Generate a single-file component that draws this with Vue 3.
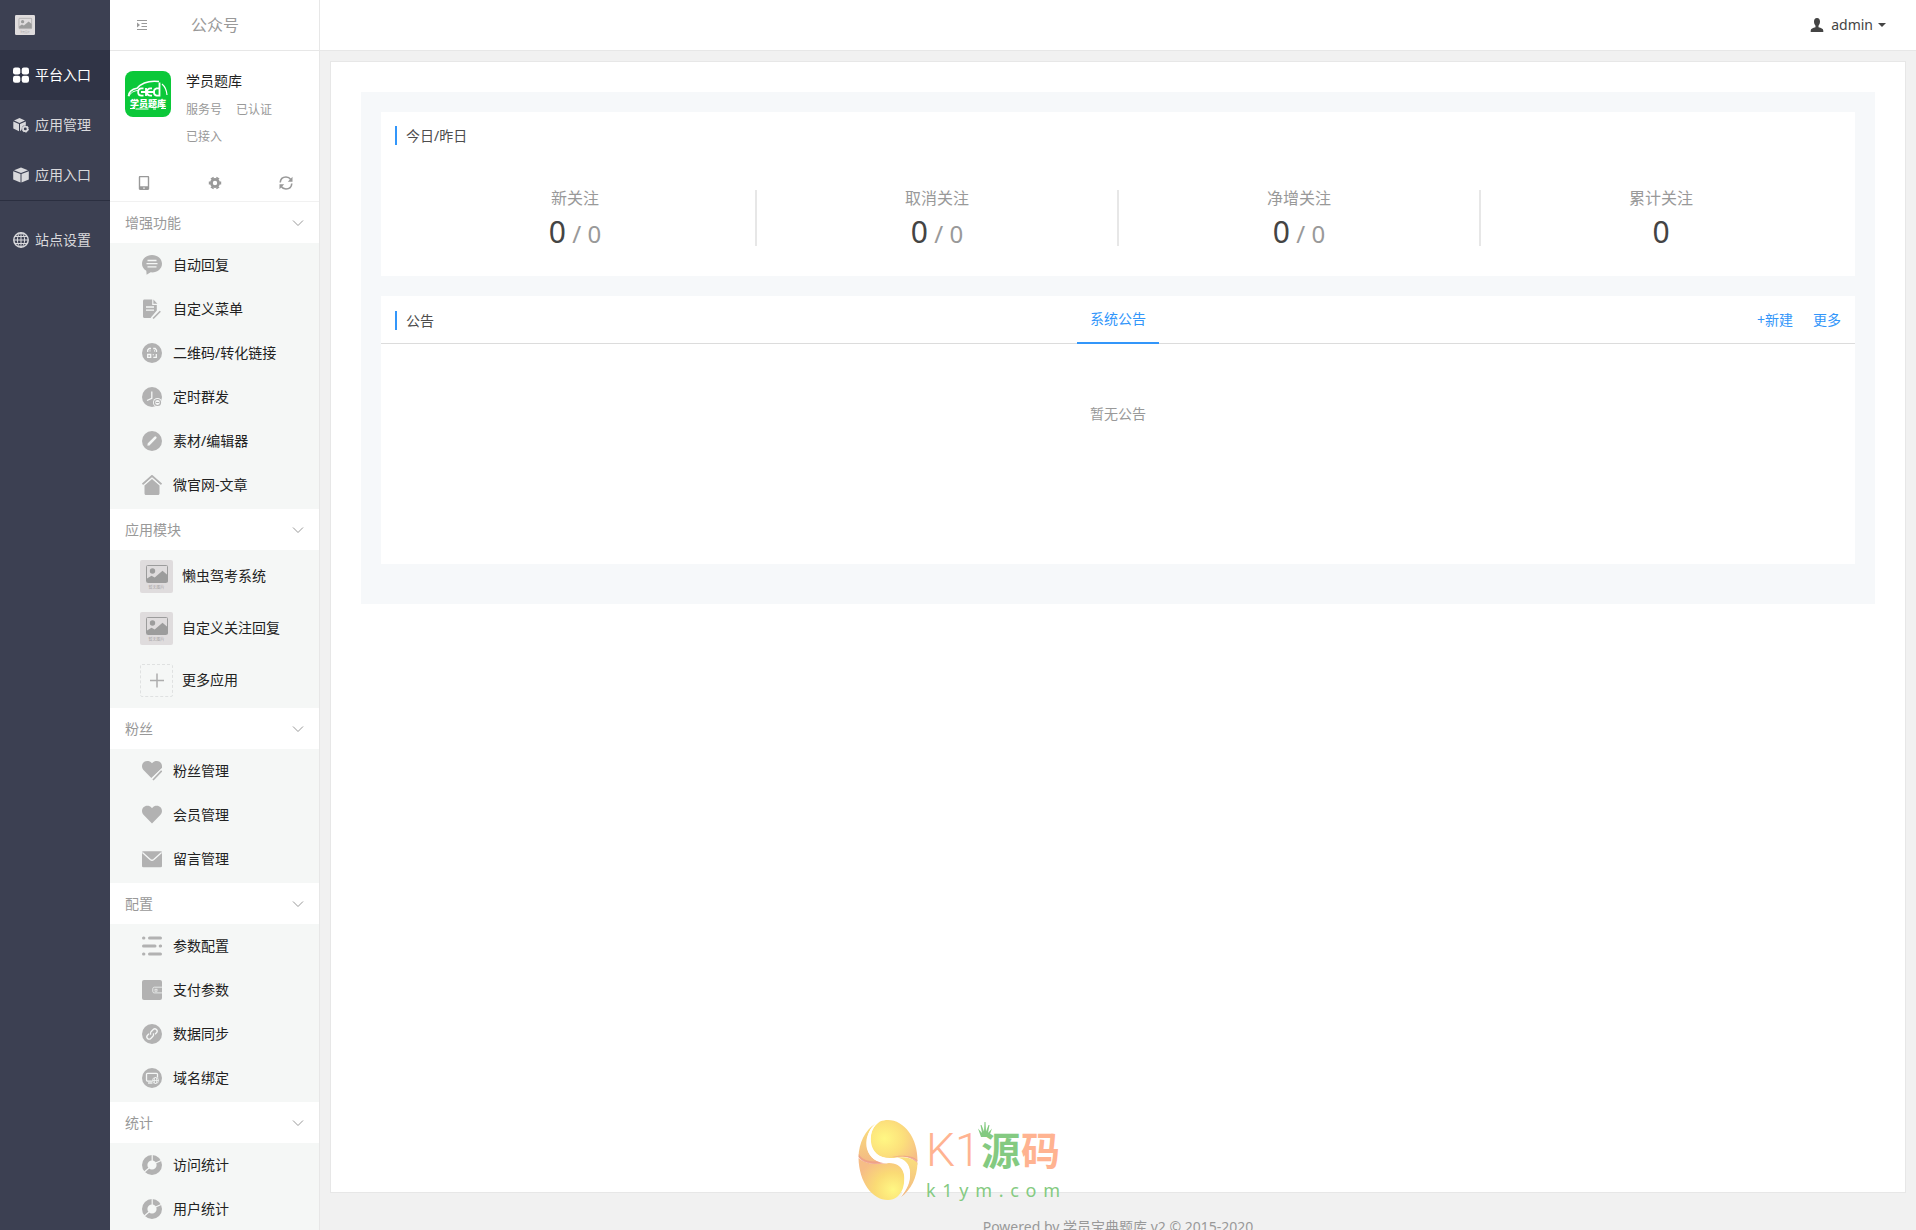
<script setup>
import { ref } from 'vue'

const railItems = [
  { label: '平台入口', icon: 'grid', active: true },
  { label: '应用管理', icon: 'box-gear' },
  { label: '应用入口', icon: 'box' },
]

const sections = ref([
  {
    title: '增强功能', open: true, items: [
      { label: '自动回复', icon: 'chat' },
      { label: '自定义菜单', icon: 'doc-edit' },
      { label: '二维码/转化链接', icon: 'qr' },
      { label: '定时群发', icon: 'clock' },
      { label: '素材/编辑器', icon: 'pen' },
      { label: '微官网-文章', icon: 'home' },
    ],
  },
  {
    title: '应用模块', open: true, apps: true, items: [
      { label: '懒虫驾考系统', icon: 'noimage' },
      { label: '自定义关注回复', icon: 'noimage' },
      { label: '更多应用', icon: 'plus' },
    ],
  },
  {
    title: '粉丝', open: true, items: [
      { label: '粉丝管理', icon: 'heart-edit' },
      { label: '会员管理', icon: 'heart' },
      { label: '留言管理', icon: 'mail' },
    ],
  },
  {
    title: '配置', open: true, items: [
      { label: '参数配置', icon: 'params' },
      { label: '支付参数', icon: 'wallet' },
      { label: '数据同步', icon: 'link' },
      { label: '域名绑定', icon: 'domain' },
    ],
  },
  {
    title: '统计', open: true, items: [
      { label: '访问统计', icon: 'donut' },
      { label: '用户统计', icon: 'donut' },
    ],
  },
])

const stats = [
  { label: '新关注', today: 0, yesterday: 0 },
  { label: '取消关注', today: 0, yesterday: 0 },
  { label: '净增关注', today: 0, yesterday: 0 },
  { label: '累计关注', today: 0 },
]

const domain = 'k1ym.com'.split('')
</script>

<template>
  <div class="layout">
    <svg class="sprite" aria-hidden="true">
      <symbol id="i-grid" viewBox="0 0 16 16">
        <rect x="0" y="0.5" width="7.3" height="7" rx="2.2" /><rect x="8.7" y="0.5" width="7.3" height="7" rx="2.2" />
        <rect x="0" y="8.7" width="7.3" height="7" rx="2.2" /><rect x="8.7" y="8.7" width="7.3" height="7" rx="2.2" />
      </symbol>
      <symbol id="i-box-gear" viewBox="0 0 16 16">
        <path d="M6.5 1 12 3.4 6.5 5.9 1 3.4z" />
        <path d="M0.3 4.4 6 7v7.2L0.3 11.4z" />
        <path d="M7 7 12.8 4.4v3.9c-2.600-.2-4.300 1.600-4.100 4.200L7 14.200z" />
        <circle cx="12.300" cy="11.900" r="2.300" fill="none" stroke="currentColor" stroke-width="1.700" />
        <circle cx="12.300" cy="11.900" r="3.300" fill="none" stroke="currentColor" stroke-width="1" stroke-dasharray="1.500 1.950" />
      </symbol>
      <symbol id="i-box" viewBox="0 0 16 16">
        <path d="M8 .6 15 3.200 8 6 1 3.200z" /><path d="M.2 4.200 7.500 7.100V15.600L.2 12.500z" /><path d="M15.800 4.200 8.500 7.100V15.600l7.300-3.100z" />
      </symbol>
      <symbol id="i-globe" viewBox="0 0 16 16">
        <g fill="none" stroke="currentColor"><circle cx="8" cy="8" r="7.200" stroke-width="1.500" /><ellipse cx="8" cy="8" rx="3.600" ry="7" /><path d="M8 1v14M1 8h14M2 4.500h12M2 11.500h12" /></g>
      </symbol>
      <symbol id="i-noimage" viewBox="0 0 33 33">
        <rect width="33" height="33" rx="2" fill="#dfdcdd" />
        <rect x="6.500" y="5.500" width="21" height="17" rx="1" fill="none" stroke="#9c9c9c" />
        <circle cx="12.500" cy="11" r="2.700" fill="#9c9c9c" />
        <path d="M7 18.500l4.500-2.700 3.200 1.700 7.800-6.800 5 4.300V22H7z" fill="#9c9c9c" />
        <text x="16.500" y="29" font-size="4" text-anchor="middle" fill="#a8a6a7">暂无图片</text>
      </symbol>
      <symbol id="i-plus" viewBox="0 0 33 33">
        <rect x=".5" y=".5" width="32" height="32" rx="1.500" fill="none" stroke="#dfe1e1" stroke-dasharray="3 2" />
        <path d="M17 9.500v14M10 16.500h14" fill="none" stroke="#adadad" stroke-width="1.500" />
      </symbol>
      <symbol id="i-chat" viewBox="0 0 20 20">
        <path d="M10 0C4.400 0 0 3.900 0 8.700c0 3 1.700 5.600 4.300 7.100L4.600 19.800 8.600 17.300c.5.100.9.100 1.400.1 5.600 0 10-3.900 10-8.700S15.600 0 10 0z" />
        <path d="M5.500 5.500h9M4.500 8.700h11M5.500 11.900h9" class="cut" />
      </symbol>
      <symbol id="i-doc-edit" viewBox="0 0 20 20">
        <path d="M2.500.5h7.700V6h4.600v5.500L8.600 19H2.500C1.600 19 1 18.400 1 17.500V2C1 1.100 1.600.5 2.500.5z" />
        <path d="M11.400.5l4 4.300h-4z" />
        <path d="M4 8h8M4 11.200h8" class="cut" />
        <path d="M18.600 11.500l-8 8" fill="none" stroke="#f5f7f6" stroke-width="3.600" />
        <path d="M18.300 12.300l-7.200 7.200" fill="none" stroke="currentColor" stroke-width="1.600" />
      </symbol>
      <symbol id="i-qr" viewBox="0 0 20 20">
        <circle cx="10" cy="10" r="10" />
        <path d="M5.700 9V7l1.500-1.500H9M11.200 5.500h2l1.300 1.700V9M5.700 11.500h3v2.800h-3zM14.300 11v3.300h-3M11.300 11.300v1M7.500 7.800h1M12 7.800h1" class="cut" />
      </symbol>
      <symbol id="i-clock" viewBox="0 0 20 20">
        <circle cx="10" cy="10" r="10" /><path d="M9.800 4.500v6.800L5 13.500" class="cut" />
        <circle cx="15.500" cy="15.500" r="4.500" fill="#f5f7f6" />
        <circle cx="15.500" cy="15.500" r="3" fill="none" stroke="currentColor" stroke-width="1.200" />
        <path d="M13.800 15.500h3.400" fill="none" stroke="currentColor" />
      </symbol>
      <symbol id="i-pen" viewBox="0 0 20 20">
        <circle cx="10" cy="10" r="10" /><path d="M7 13L13.300 6.700" fill="none" stroke="#f5f7f6" stroke-width="2.600" stroke-linecap="round" /><path d="M5.300 14.700l.7-2.800 2.100 2.100z" fill="#f5f7f6" />
      </symbol>
      <symbol id="i-home" viewBox="0 0 20 20">
        <path d="M.5 9.300L10 1l9.500 8.300" fill="none" stroke="currentColor" stroke-width="2" />
        <path d="M.5 11.200L10 2.900l9.500 8.300" fill="none" stroke="#f5f7f6" />
        <path d="M2.500 10.600L10 4.100l7.500 6.500V18.500c0 .900-.6 1.500-1.500 1.500H4c-.9 0-1.500-.6-1.500-1.500z" />
      </symbol>
      <symbol id="i-heart" viewBox="0 0 20 20">
        <path d="M10 3.200C8.700 1.400 6.900.8 5.200.8 2.200.8 0 3.200 0 6c0 2 .9 3.200 2.200 4.600L10 18.600l7.800-8C19.100 9.200 20 8 20 6 20 3.200 17.800.8 14.800.8c-1.700 0-3.500.6-4.800 2.400z" />
      </symbol>
      <symbol id="i-heart-edit" viewBox="0 0 20 20">
        <path d="M10 2.200C8.700.6 6.900 0 5.200 0 2.200 0 0 2.400 0 5.200c0 2 .9 3.200 2.200 4.600L9.300 17 20 7V5.200C20 2.400 17.800 0 14.800 0 13.100 0 11.300.6 10 2.200z" />
        <path d="M21 8.500L9.800 19.500" fill="none" stroke="#f5f7f6" stroke-width="3.600" />
        <path d="M19.700 9.800L11 19" fill="none" stroke="currentColor" stroke-width="1.700" />
      </symbol>
      <symbol id="i-mail" viewBox="0 0 20 20">
        <rect x="0" y="2.200" width="20" height="16" rx="1.300" /><path d="M.4 3.500l7.800 7c1.200 1 2.400 1 3.600 0l7.800-7" class="cut" />
      </symbol>
      <symbol id="i-params" viewBox="0 0 20 20">
        <g stroke="currentColor" stroke-width="3" stroke-linecap="round"><path d="M7.500 2h11M1.500 2h.4M1.500 10h11.500M18.200 10h.4M7.500 18h11M1.500 18h.4" /></g>
      </symbol>
      <symbol id="i-wallet" viewBox="0 0 20 20">
        <rect width="20" height="20" rx="2" /><path d="M20 7.200h-7.600c-1 0-1.600.6-1.600 1.600v2.500c0 1 .6 1.600 1.600 1.600H20" fill="none" stroke="#f5f7f6" stroke-width=".8" /><rect x="13" y="9.200" width="2" height="2" fill="none" stroke="#f5f7f6" stroke-width=".7" />
      </symbol>
      <symbol id="i-link" viewBox="0 0 20 20">
        <circle cx="10" cy="10" r="10" />
        <g transform="rotate(-45 10 10)" class="cut"><path d="M11.300 10.300a2.500 2.300 0 0 1-2.300 2H6a2.300 2.300 0 0 1 0-4.600h2" /><path d="M8.700 9.700a2.500 2.300 0 0 1 2.300-2h3a2.300 2.300 0 0 1 0 4.600h-2" /></g>
      </symbol>
      <symbol id="i-domain" viewBox="0 0 20 20">
        <circle cx="10" cy="10" r="10" />
        <rect x="4.500" y="5.300" width="11" height="7.800" rx="1" class="cut" /><path d="M6 15h4.500" class="cut" />
        <circle cx="13.500" cy="12.500" r="3.600" fill="#b2b2b2" /><g fill="none" stroke="#f5f7f6" stroke-width=".8"><circle cx="13.500" cy="12.500" r="3" /><ellipse cx="13.500" cy="12.500" rx="1.300" ry="3" /><path d="M10.500 12.500h6" /></g>
      </symbol>
      <symbol id="i-donut" viewBox="0 0 20 20">
        <circle cx="10" cy="10" r="7.300" fill="none" stroke="currentColor" stroke-width="5.400" />
        <path d="M10.200 6V0M13.500 8l5.700-2.500M7 13l-4.700 4" fill="none" stroke="#f5f7f6" stroke-width="1.200" />
      </symbol>
    </svg>

    <nav class="rail">
      <a href="#" class="rail-logo" aria-label="首页"><svg><use href="#i-noimage" /></svg></a>
      <a v-for="item in railItems" :key="item.label" href="#" class="rail-item" :class="{ active: item.active }">
        <svg><use :href="`#i-${item.icon}`" /></svg>{{ item.label }}
      </a>
      <div class="rail-group">
        <a href="#" class="rail-item"><svg><use href="#i-globe" /></svg>站点设置</a>
      </div>
    </nav>

    <aside class="side">
      <header class="side-head">
        <button type="button" class="fold" aria-label="收起菜单">
          <svg viewBox="0 0 10 10"><path d="M0 .5h10M4.500 3.500H10M4.500 6.500H10M0 9.500h10" stroke="currentColor" /><path d="M0 2.500v5l3-2.500z" fill="currentColor" /></svg>
        </button>
        <h1>公众号</h1>
      </header>

      <section class="account">
        <svg class="account-logo" viewBox="0 0 46 46">
          <rect width="46" height="46" rx="8" fill="#0bc839" />
          <g fill="none" stroke="#fff">
            <path d="M3.500 25c.4-5.500 4-7 8.500-7.800C17 11.500 24 9.300 34 10.500" stroke-width="1.600" />
            <path d="M4 25.500c1.200-4 5-5.700 10-6.200" stroke-width="1" />
            <path d="M18.500 17.300h-2c-4.500 0-4.500 7.400 0 7.400h2M27 17.300h-1.500c-4.500 0-4.500 7.400 0 7.400H27M21 17v8M16 21h14M34.500 11.500V25.500M34.500 24.700h-3c-3.500-1-3.500-6.400 0-7.400h3" stroke-width="1.800" />
            <path d="M37 13c3 2.500 4.500 5 5 11" stroke-width="1.200" />
            <path d="M5 37.500h5M10.500 38h13M28 38h3M36 37.500h5" stroke-width="1" />
          </g>
          <text x="23" y="36" text-anchor="middle" font-size="9" font-weight="900" fill="#fff">学员题库</text>
        </svg>
        <div class="account-info">
          <h2>学员题库</h2>
          <p><span>服务号</span><span>已认证</span></p>
          <p><span>已接入</span></p>
        </div>
      </section>

      <div class="tools">
        <button type="button" aria-label="手机预览">
          <svg viewBox="0 0 14 14"><path fill-rule="evenodd" d="M3 0h8c.7 0 1.200.5 1.200 1.200v11.600c0 .7-.5 1.200-1.200 1.200H3c-.7 0-1.200-.5-1.200-1.200V1.200C1.800.5 2.300 0 3 0zm.2 1.300v9h7.600v-9zM6.300 11.500v1.200h1.400v-1.200z" /></svg>
        </button>
        <button type="button" aria-label="设置">
          <svg viewBox="0 0 14 14"><circle cx="7" cy="7" r="3.600" fill="none" stroke="currentColor" stroke-width="2.800" /><path d="M.8 7h1.600M11.600 7h1.600M3.900 1.600l.8 1.400M9.300 11l.8 1.400M10.100 1.600L9.300 3M4.700 11l-.8 1.400" fill="none" stroke="currentColor" stroke-width="3.200" /></svg>
        </button>
        <button type="button" aria-label="刷新">
          <svg viewBox="0 0 14 14"><g fill="none" stroke="currentColor" stroke-width="1.600"><path d="M1.200 6.500C1.500 3 4 1 7 1c2 0 3.600.8 4.800 2.500M12.800 7.500C12.500 11 10 13 7 13c-2 0-3.600-.8-4.800-2.500" /></g><path d="M13.500.8v5H8.800zM.5 13.200v-5h4.700z" /></svg>
        </button>
      </div>

      <section v-for="sec in sections" :key="sec.title" class="group">
        <button type="button" class="group-title" :aria-expanded="sec.open" @click="sec.open = !sec.open">
          {{ sec.title }}
          <svg viewBox="0 0 12 12"><path d="M1 3.500l5 5 5-5" fill="none" stroke="currentColor" /></svg>
        </button>
        <ul v-show="sec.open" :class="{ apps: sec.apps }">
          <li v-for="item in sec.items" :key="item.label">
            <a href="#"><svg><use :href="`#i-${item.icon}`" /></svg>{{ item.label }}</a>
          </li>
        </ul>
      </section>
    </aside>

    <div class="main">
      <header class="topbar">
        <button type="button" class="user">
          <svg viewBox="0 0 14 14"><path d="M7 0C4.900 0 4 1.600 4 3.600c0 1.900.7 3.200 1.500 4.100v1.600C3 10 .7 10.600.7 12.800V14h12.600v-1.200c0-2.200-2.300-2.800-4.800-3.500V7.700C9.300 6.800 10 5.500 10 3.600 10 1.600 9.100 0 7 0z" /></svg>
          admin
          <i class="caret"></i>
        </button>
      </header>

      <main class="panel">
        <div class="board">
          <section class="card stats-card">
            <h3>今日/昨日</h3>
            <dl class="stats">
              <div v-for="s in stats" :key="s.label" class="stat">
                <dt>{{ s.label }}</dt>
                <dd>{{ s.today }}<small v-if="s.yesterday !== undefined"> / {{ s.yesterday }}</small></dd>
              </div>
            </dl>
          </section>
          <section class="card notice">
            <header class="notice-head">
              <h3>公告</h3>
              <a href="#" class="tab">系统公告</a>
              <div class="notice-links"><a href="#">+新建</a><a href="#">更多</a></div>
            </header>
            <p class="empty">暂无公告</p>
          </section>
        </div>
      </main>

      <footer class="foot">Powered by 学员宝典题库 v2 © 2015-2020</footer>
    </div>

    <div class="watermark">
      <svg class="egg" viewBox="0 0 60 80">
        <defs>
          <radialGradient id="yolk-top" cx=".3" cy=".45" r=".8"><stop offset="0" stop-color="#fff783" /><stop offset=".5" stop-color="#fce07b" /><stop offset="1" stop-color="#f6bd86" /></radialGradient>
          <radialGradient id="yolk-bottom" cx=".75" cy=".75" r=".8"><stop offset="0" stop-color="#fff783" /><stop offset=".5" stop-color="#fadb75" /><stop offset="1" stop-color="#f6bd86" /></radialGradient>
          <linearGradient id="yolk-side" x1="0" y1="0" x2="0" y2="1"><stop offset="0" stop-color="#fadf7c" /><stop offset="1" stop-color="#f3b984" /></linearGradient>
        </defs>
        <path d="M17 4C7 10 1 23 .5 37 6 43 14 44 25 43 15 41 9 34 9 24 9 15 12 8 17 4z" fill="url(#yolk-side)" />
        <path d="M.5 38C1 62 14 80 30 80c7 0 12-4 15-12 4-13 0-25-14-25-13 2-24 1-30.500-5z" fill="url(#yolk-bottom)" />
        <path d="M30 0c16 0 30 18 29.500 41C53 36 45 36 36 38c-12 2-22-4-23.500-16C12 13 15 6 22 1.500 25 .5 27 0 30 0z" fill="url(#yolk-top)" />
        <path d="M.8 34c4 7 12 8 22 7 4 0 6 0 9 1.500C21 45 6 45 .8 37.500zM59.300 45C55 37 46 35.500 34 37c8-2 20-2 25.300 3z" fill="#ee9c88" opacity=".8" />
        <path d="M59.500 43C59 58 53 70 43 77c6-8 9-16 9-24 0-9-5-14-13-15.500 9-1 16 1 20.500 5.500z" fill="url(#yolk-side)" />
        <path d="M17.500 4C9 11 7 21 9 29c3 10 12 15 22 14 10-1 15 5 15.500 14 0 8-1 14-4 20 7-8 10-15 9.500-24-.5-10-8-16-18-15-11 1-20-5-21-16C12 13 15 6 22 1.500z" fill="#fff" />
      </svg>
      <div class="brand">
        <div class="brand-name">
          <span class="latin">K1</span>
          <span class="yuan">源<svg class="crown" viewBox="0 0 14 15"><path d="M3 15L0 6.500l4 4.500L2.500 3l1 0L6 9.500 6.500 0h1L8 9.500 10.500 3l1 0L10 11l4-4.500L11 15z" /></svg></span>
          <span>码</span>
        </div>
        <div class="brand-url"><span v-for="(c, i) in domain" :key="i">{{ c }}</span></div>
      </div>
    </div>
  </div>
</template>

<style>
body {
  margin: 0;
  overflow: hidden;
}
</style>

<style scoped>
* {
  box-sizing: border-box;
}

.layout {
  display: flex;
  height: 100vh;
  overflow: hidden;
  position: relative;
  background: #f1f1f1;
  color: #222;
  font: 14px/20px "Noto Sans", "Noto Sans CJK SC", sans-serif;
}

.sprite {
  position: absolute;
  width: 0;
  height: 0;
}

svg {
  fill: currentColor;
  display: block;
  flex: none;
}

.cut {
  fill: none;
  stroke: #f5f7f6;
  stroke-width: 1.3;
}

h1, h2, h3, p, ul, dl, dd {
  margin: 0;
  padding: 0;
  font-weight: 400;
  font-size: 14px;
}

a {
  color: inherit;
  text-decoration: none;
}

button {
  border: 0;
  padding: 0;
  background: none;
  font: inherit;
  color: inherit;
  cursor: pointer;
}

.rail {
  flex: none;
  width: 110px;
  background: #3c4052;
  color: #d9d9dc;
}

.rail-logo {
  display: flex;
  align-items: center;
  height: 50px;
  padding-left: 15px;
}

.rail-logo svg {
  width: 20px;
  height: 20px;
}

.rail-item {
  display: flex;
  align-items: center;
  gap: 6px;
  height: 50px;
  padding-left: 13px;
}

.rail-item.active {
  background: #303446;
  color: #fff;
}

.rail-item svg {
  width: 16px;
  height: 16px;
}

.rail-group {
  border-top: 1px solid #2b2f40;
  padding-top: 14px;
}

.side {
  flex: none;
  width: 210px;
  background: #fff;
  border-right: 1px solid #e7e7e7;
}

.side-head {
  display: flex;
  align-items: center;
  height: 51px;
  padding-left: 27px;
  border-bottom: 1px solid #e7e7e7;
  color: #999;
}

.side-head h1 {
  margin-left: 44px;
  font-size: 16px;
}

.fold svg {
  width: 10px;
  height: 10px;
}

.account {
  display: flex;
  gap: 15px;
  height: 113px;
  padding: 20px 15px 0;
}

.account-logo {
  width: 46px;
  height: 46px;
}

.account-info p {
  display: flex;
  gap: 14px;
  margin-top: 7px;
  font-size: 12px;
  color: #999;
}

.account-info p:first-of-type {
  margin-top: 9px;
}

.tools {
  display: flex;
  justify-content: space-between;
  align-items: center;
  height: 38px;
  padding: 0 26px 0 27px;
  border-bottom: 1px solid #f1f1f1;
  color: #999;
}

.tools svg {
  width: 14px;
  height: 14px;
}

.group-title {
  display: flex;
  align-items: center;
  justify-content: space-between;
  width: 100%;
  height: 41px;
  padding: 0 15px;
  color: #999;
}

.group-title svg {
  width: 12px;
  height: 12px;
}

.group ul {
  list-style: none;
  background: #f5f7f6;
  padding-bottom: 2px;
}

.group a {
  display: flex;
  align-items: center;
  gap: 11px;
  height: 44px;
  padding-left: 32px;
}

.group li svg {
  width: 20px;
  height: 20px;
  color: #b2b2b2;
}

.group .apps a {
  height: 52px;
  padding-left: 30px;
  gap: 9px;
}

.group .apps svg {
  width: 33px;
  height: 33px;
}

.main {
  flex: 1;
  min-width: 0;
  display: flex;
  flex-direction: column;
}

.topbar {
  flex: none;
  display: flex;
  justify-content: flex-end;
  height: 51px;
  padding-right: 30px;
  background: #fff;
  border-bottom: 1px solid #e7e7e7;
}

.user {
  display: flex;
  align-items: center;
  color: #444;
}

.user svg {
  width: 14px;
  height: 14px;
  margin-right: 7px;
}

.caret {
  margin-left: 5px;
  border: 4px solid transparent;
  border-top-color: currentColor;
  border-bottom: 0;
}

.panel {
  flex: 1;
  margin: 10px 10px 0;
  padding: 30px;
  background: #fff;
  border: 1px solid #e7e7e7;
}

.board {
  display: flex;
  flex-direction: column;
  gap: 20px;
  padding: 20px 20px 40px;
  background: #f6f8fa;
}

.card {
  background: #fff;
}

.card h3 {
  padding-left: 9px;
  border-left: 2px solid #3296fa;
  line-height: 19px;
  color: #4d4d4d;
}

.stats-card {
  padding: 14px 14px 30px;
}

.stats {
  display: flex;
  margin-top: 45px;
}

.stat {
  flex: 1;
  height: 56px;
  text-align: center;
  color: #999;
  border-left: 2px solid #e7e7e7;
}

.stat:first-child {
  border-left: 0;
}

.stat dt {
  font-size: 16px;
  line-height: 16px;
}

.stat dd {
  font-size: 30px;
  line-height: 52px;
  color: #444;
}

.stat small {
  font-size: 24px;
  color: #999;
}

.notice {
  min-height: 268px;
}

.notice-head {
  display: grid;
  grid-template-columns: 1fr auto 1fr;
  align-items: center;
  height: 48px;
  padding: 0 14px;
  border-bottom: 1px solid #dcdcdc;
}

.tab {
  align-self: start;
  height: 48px;
  padding: 0 13px;
  line-height: 46px;
  color: #3296fa;
  border-bottom: 2px solid #3296fa;
}

.notice-links {
  display: flex;
  justify-content: flex-end;
  gap: 20px;
  color: #3296fa;
}

.empty {
  margin-top: 60px;
  text-align: center;
  color: #999;
}

.foot {
  flex: none;
  height: 37px;
  padding-top: 24px;
  text-align: center;
  color: #999;
}

.watermark {
  position: absolute;
  left: 858px;
  bottom: 30px;
  display: flex;
  gap: 8px;
  pointer-events: none;
}

.egg {
  width: 60px;
  height: 80px;
}

.brand {
  width: 134px;
  color: #84ca81;
}

.brand-name {
  display: flex;
  align-items: center;
  justify-content: space-between;
  height: 60px;
  font-size: 39px;
  font-weight: 700;
  color: #ffb391;
}

.latin {
  font: 300 46px/60px Roboto, sans-serif;
}

.yuan {
  position: relative;
  color: #84ca81;
}

.crown {
  position: absolute;
  left: -3px;
  top: -18px;
  width: 14px;
  height: 15px;
}

.brand-url {
  display: flex;
  justify-content: space-between;
  font-size: 18px;
  line-height: 20px;
}
</style>
